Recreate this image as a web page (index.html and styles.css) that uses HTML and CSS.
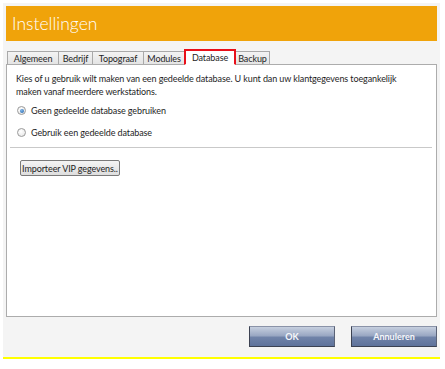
FILE: index.html
```html
<!DOCTYPE html>
<html lang="nl">
<head>
<meta charset="utf-8">
<title>Instellingen</title>
<link rel="stylesheet" href="styles.css">
</head>
<body>
<div class="window">
  <div class="header"><h1 class="title">Instellingen</h1></div>
  <div class="tabs">
    <div class="tab tab-w51">Algemeen</div>
    <div class="tab tab-w34">Bedrijf</div>
    <div class="tab tab-w51">Topograaf</div>
    <div class="tab tab-w41">Modules</div>
    <div class="tab tab-w51 tab-active">Database</div>
    <div class="tab tab-w34">Backup</div>
  </div>
  <div class="panel">
    <p class="intro">Kies of u gebruik wilt maken van een gedeelde database. U kunt dan uw klantgegevens toegankelijk maken vanaf meerdere werkstations.</p>
    <label class="radio-row first"><span class="radio checked"></span><span>Geen gedeelde database gebruiken</span></label>
    <label class="radio-row second"><span class="radio"></span><span>Gebruik een gedeelde database</span></label>
    <div class="separator"></div>
    <button class="import-btn">Importeer VIP gegevens..</button>
  </div>
  <div class="footer">
    <button class="dlg-btn">OK</button>
    <button class="dlg-btn">Annuleren</button>
  </div>
</div>
</body>
</html>
```

FILE: styles.css
```css
* { box-sizing: border-box; }
body {
  margin: 0;
  background: #ffffff;
  font-family: Lato, "Open Sans", sans-serif;
  font-size: 9px;
  letter-spacing: -0.1px;
  color: #1e1e1e;
}
.window {
  margin: 3px 0 0 3px;
  width: 437px;
  height: 356px;
  background: #f4f4f4;
  padding: 3px 3px 0 3px;
  border-bottom: 2px solid #ffff00;
  display: flex;
  flex-direction: column;
}
.header {
  height: 35px;
  background: #f0a30a;
  display: flex;
  align-items: center;
  padding-left: 6px;
}
.title {
  margin: 0;
  font-family: Lato, "Open Sans", sans-serif;
  font-weight: 300;
  font-size: 17.5px;
  letter-spacing: 0;
  color: #ffffff;
}
.tabs {
  display: flex;
  align-items: flex-end;
  margin-top: 8px;
  height: 15px;
  padding-left: 1px;
  position: relative;
  z-index: 1;
}
.tab {
  height: 13px;
  border: 1px solid #a9a9a9;
  border-bottom: none;
  margin-right: -1px;
  background: linear-gradient(#f3f3f3, #e4e4e4);
  display: flex;
  align-items: center;
  justify-content: center;
  font-size: 9px;
  line-height: 1;
  color: #1e1e1e;
  white-space: nowrap;
}
.tab-w51 { width: 52px; }
.tab-w34 { width: 35px; }
.tab-w41 { width: 42px; }
.tab-active {
  height: 16px;
  background: #ffffff;
  border: 2px solid #e8101a;
  border-bottom: 1px solid #ffffff;
  margin-bottom: -1px;
  position: relative;
  z-index: 2;
}
.panel {
  height: 253px;
  background: #ffffff;
  border: 1px solid #acacac;
  padding: 7px 4px 0 3px;
  display: flex;
  flex-direction: column;
  align-items: flex-start;
}
.intro {
  margin: 0 0 0 6px;
  width: 400px;
  line-height: 13px;
}
.radio-row {
  display: flex;
  align-items: center;
  height: 13px;
  margin-left: 7px;
}
.radio-row.first { margin-top: 6px; }
.radio-row.second { margin-top: 9px; }
.radio {
  width: 9px;
  height: 9px;
  border-radius: 50%;
  border: 1px solid #9a9a9a;
  background: radial-gradient(circle at 40% 35%, #ffffff, #e3e3e3);
  margin-right: 5px;
  display: flex;
  align-items: center;
  justify-content: center;
}
.radio.checked::after {
  content: "";
  width: 4px;
  height: 4px;
  border-radius: 50%;
  background: radial-gradient(circle at 40% 35%, #7fb6e8, #1d5ea8);
}
.separator {
  margin-top: 8px;
  align-self: stretch;
  height: 2px;
  border-top: 1px solid #c9c9c9;
  border-bottom: 1px solid #ffffff;
}
.import-btn {
  margin: 11px 0 0 10px;
  width: 100px;
  height: 16px;
  padding: 0;
  border: 1px solid #7a7a7a;
  border-radius: 2px;
  background: linear-gradient(#f4f4f4, #dedede);
  font-family: inherit;
  font-size: 9px;
  letter-spacing: -0.1px;
  color: #1e1e1e;
  line-height: 1;
  white-space: nowrap;
}
.footer {
  display: flex;
  justify-content: flex-end;
  gap: 16px;
  margin-top: 9px;
}
.dlg-btn {
  width: 86px;
  height: 21px;
  padding: 0;
  border: 1px solid #3c4252;
  border-top-color: #8a93a8;
  border-right-color: #5a6276;
  background: linear-gradient(#c6cfdf 0%, #9aa8c3 45%, #6f82a8 55%, #5f739b 100%);
  color: #f6f7fa;
  font-family: inherit;
  font-size: 9px;
  font-weight: 700;
  line-height: 1;
}
```
